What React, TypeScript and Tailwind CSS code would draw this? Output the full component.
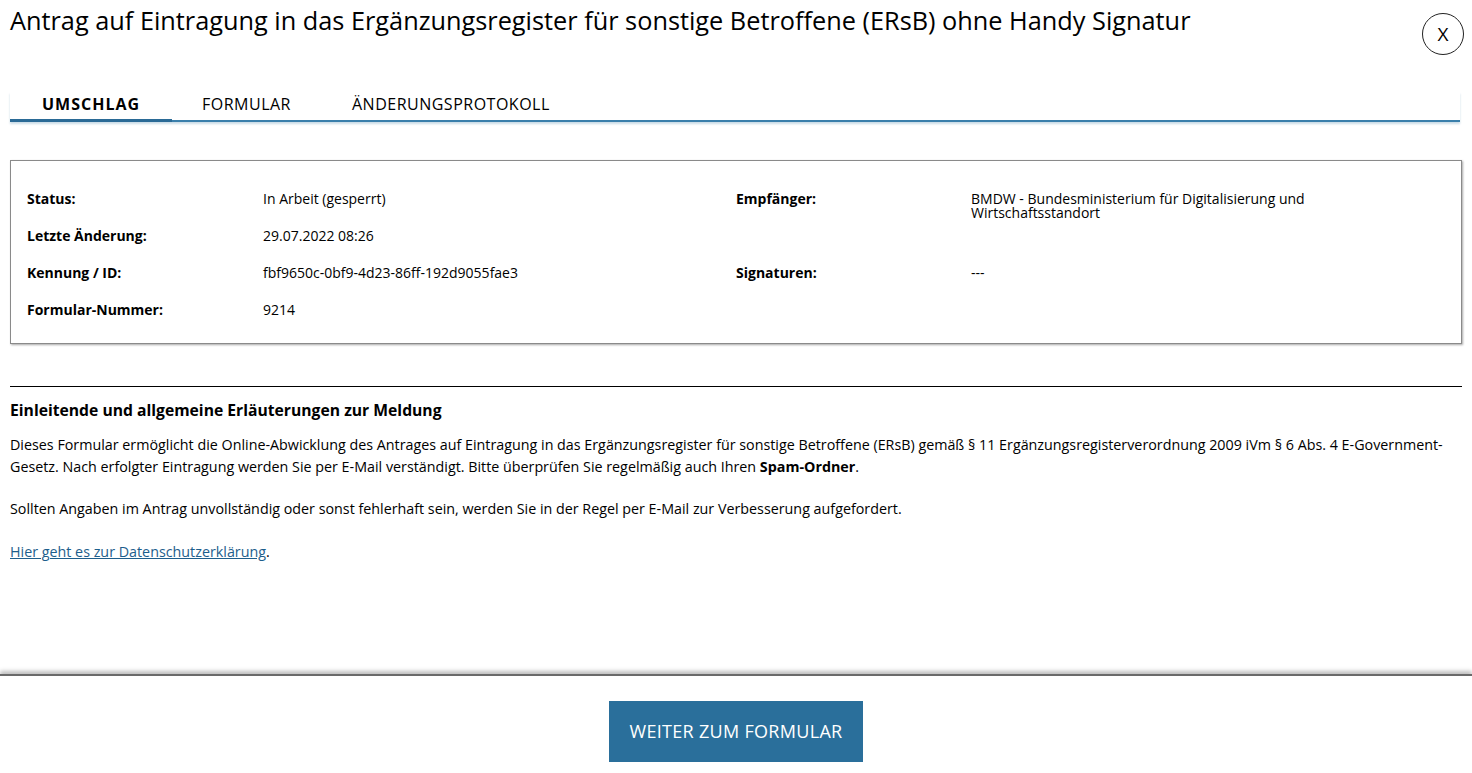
import React from "react";

const rows = [
  { l: "Status:", v: "In Arbeit (gesperrt)", l2: "Empfänger:", v2: "BMDW - Bundesministerium für Digitalisierung und Wirtschaftsstandort" },
  { l: "Letzte Änderung:", v: "29.07.2022 08:26", l2: "", v2: "" },
  { l: "Kennung / ID:", v: "fbf9650c-0bf9-4d23-86ff-192d9055fae3", l2: "Signaturen:", v2: "---" },
  { l: "Formular-Nummer:", v: "9214", l2: "", v2: "" },
];

export default function App() {
  return (
    <div
      className="flex h-[773px] w-full flex-col overflow-hidden bg-white text-black"
      style={{ fontFamily: '"Open Sans", "Noto Sans", sans-serif' }}
    >
      <div className="flex-1 px-[10px]">
        <div className="flex items-start justify-between pt-[4px]">
          <h1 className="text-[25.3px] leading-[32px] font-medium">
            Antrag auf Eintragung in das Ergänzungsregister für sonstige Betroffene (ERsB) ohne Handy Signatur
          </h1>
          <button className="mt-[9px] mr-[-2px] flex h-[42px] w-[42px] items-center justify-center rounded-full border border-[#222] text-[19px] leading-none">
            X
          </button>
        </div>

        <div className="mt-[37px] mr-[2px] flex border-b-2 border-[#3a7fab] shadow-[0_2px_2px_rgba(42,111,155,0.25)]">
          <div className="mb-[-2px] flex w-[162px] justify-center border-b-[3px] border-[#2a6a96] pb-[2px] text-[16px] font-bold tracking-[1px]">
            UMSCHLAG
          </div>
          <div className="ml-[30px] pb-[4px] text-[16px] tracking-[0.5px]">FORMULAR</div>
          <div className="ml-[61px] pb-[4px] text-[16px] tracking-[0.5px]">ÄNDERUNGSPROTOKOLL</div>
        </div>

        <div className="mt-[38px] border border-[#8a8a8a] px-[16px] pt-[31px] pb-[26px] shadow-[1px_1px_2px_rgba(0,0,0,0.35)]">
          <div className="grid grid-cols-[236px_473px_235px_1fr] auto-rows-[14px] gap-y-[23px] text-[14px] leading-[14px]">
            {rows.map((r) => (
              <React.Fragment key={r.l}>
                <div className="font-bold">{r.l}</div>
                <div>{r.v}</div>
                <div className="font-bold">{r.l2}</div>
                <div className="max-w-[370px]">{r.v2}</div>
              </React.Fragment>
            ))}
          </div>
        </div>

        <div className="mt-[42px] border-t border-black pt-[12px]">
          <h2 className="text-[15.7px] leading-[22px] font-bold">Einleitende und allgemeine Erläuterungen zur Meldung</h2>
          <p className="mt-[13px] text-[14.3px] leading-[22px]">
            Dieses Formular ermöglicht die Online-Abwicklung des Antrages auf Eintragung in das Ergänzungsregister für sonstige Betroffene (ERsB) gemäß § 11 Ergänzungsregisterverordnung 2009 iVm § 6 Abs. 4 E-Government-Gesetz. Nach erfolgter Eintragung werden Sie per E-Mail verständigt. Bitte überprüfen Sie regelmäßig auch Ihren{" "}
            <b>Spam-Ordner</b>.
          </p>
          <p className="mt-[20px] text-[14.3px] leading-[22px]">
            Sollten Angaben im Antrag unvollständig oder sonst fehlerhaft sein, werden Sie in der Regel per E-Mail zur Verbesserung aufgefordert.
          </p>
          <p className="mt-[21px] text-[14.3px] leading-[22px]">
            <a href="#" className="text-[#1d5e8c] underline">
              Hier geht es zur Datenschutzerklärung
            </a>
            .
          </p>
        </div>
      </div>

      <div className="flex h-[99px] shrink-0 justify-center border-t-2 border-[#6a6a6a] pt-[25px] shadow-[0_-3px_4px_rgba(0,0,0,0.25)]">
        <button className="h-[61px] w-[254px] bg-[#2a6f9b] text-[18px] tracking-[0.3px] text-white">
          WEITER ZUM FORMULAR
        </button>
      </div>
    </div>
  );
}
